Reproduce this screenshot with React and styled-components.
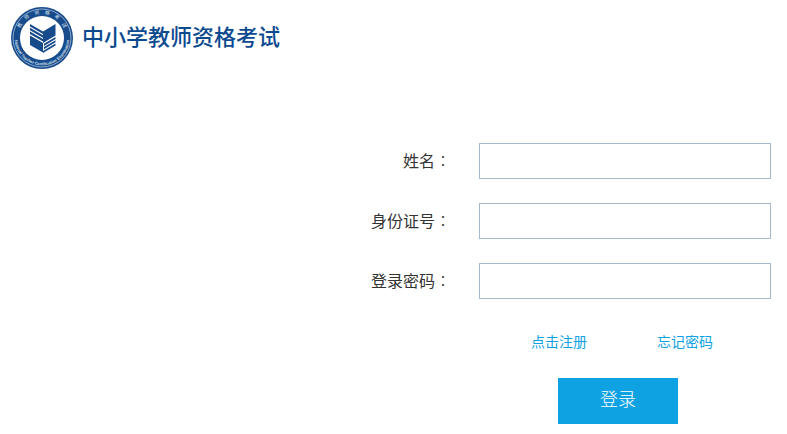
import React from "react";
import styled, { createGlobalStyle } from "styled-components";

const GlobalStyle = createGlobalStyle`
  * { box-sizing: border-box; }
  body {
    margin: 0;
    background: #fff;
    color: #333;
    font-family: "Noto Sans CJK SC", "Liberation Sans", sans-serif;
  }
`;

const Header = styled.header`
  display: flex;
  align-items: center;
  gap: 8px;
  padding: 6px 10px;
`;

const Emblem = styled.svg`
  flex: none;
  width: 64px;
  height: 64px;
`;

const Title = styled.h1`
  margin: 0;
  padding-bottom: 6px;
  color: #0c4a8f;
  font-size: 22px;
  font-weight: 500;
  line-height: 32px;
`;

const LoginForm = styled.form`
  display: flex;
  flex-direction: column;
  gap: 24px;
  max-width: 416px;
  margin: 67px 0 0 auto;
  padding: 0 16px 10px 0;
`;

const Field = styled.div`
  display: flex;
  align-items: center;
  gap: 28px;
`;

const Label = styled.label`
  flex: none;
  width: 80px;
  padding-bottom: 2px;
  font-size: 16px;
  line-height: 34px;
  text-align: right;
  white-space: nowrap;
`;

const Colon = styled.span`
  font-family: "Noto Sans CJK TC", sans-serif;
  font-weight: 300;
`;

const TextBox = styled.input`
  flex: 1;
  min-width: 0;
  height: 36px;
  padding: 0 10px;
  border: 1px solid #a5bace;
  border-radius: 0;
  background: #fff;
  color: inherit;
  font: inherit;
`;

const Actions = styled.div`
  display: flex;
  flex-direction: column;
  align-items: center;
  gap: 26px;
  margin: 8px 0 0 94px;
`;

const Links = styled.nav`
  display: flex;
  gap: 70px;
  padding-left: 8px;
`;

const TextLink = styled.a`
  color: #0ea2e3;
  font-size: 14px;
  line-height: 21px;
  text-decoration: none;
`;

const SubmitButton = styled.button`
  width: 120px;
  height: 46px;
  padding: 0 0 6px;
  border: 0;
  background: #0ea2e3;
  color: #fff;
  font-family: inherit;
  font-size: 18px;
  font-weight: 300;
  line-height: 40px;
  cursor: pointer;
`;

const fields = [
  { id: "name", label: "姓名", type: "text" },
  { id: "idNumber", label: "身份证号", type: "text" },
  { id: "password", label: "登录密码", type: "password" },
];

function Logo() {
  return (
    <Emblem viewBox="0 0 64 64" aria-hidden="true">
      <defs>
        <path id="arcTop" d="M8 32a24 24 0 0 1 48 0" />
        <path id="arcBottom" d="M5 28a27.3 27.3 0 1 0 54 0" />
      </defs>
      <circle cx="32" cy="32" r="31" fill="#174b8b" />
      <circle cx="32" cy="32" r="29" fill="none" stroke="#a9c0da" strokeWidth="0.8" />
      <circle cx="32" cy="32" r="22" fill="#fff" />
      <g fill="#d5e3f1">
        <text fontSize="5" textAnchor="middle">
          <textPath href="#arcTop" startOffset="50%">教　师　资　格　考　试</textPath>
        </text>
        <text fontSize="4" fontWeight="700" textAnchor="middle" fontFamily="Liberation Sans">
          <textPath href="#arcBottom" startOffset="50%">National Teacher Certification Examination</textPath>
        </text>
      </g>
      <g fill="#174b8b">
        <path d="M20 18 33 25.5v2.4L20 20.4z" />
        <path d="M20 21.8 33 29.3v2.4L20 24.2z" />
        <path d="M20 25.6 33 33.1v2.4L20 28z" />
        <path d="M20 29.4 33 36.9V46.5L20 39z" />
        <path d="M33 25.5 45.5 18v11.5L33 37z" />
        <path d="M34 37.8 45.5 30.9v2.1L34 39.9z" />
        <path d="M34 41.1 45.5 34.2v2.1L34 43.2z" />
        <path d="M33 44.9 45.5 37.4v2.1L33 47z" />
      </g>
    </Emblem>
  );
}

export default function App() {
  return (
    <>
      <GlobalStyle />
      <Header>
        <Logo />
        <Title>中小学教师资格考试</Title>
      </Header>
      <main>
        <LoginForm onSubmit={(event) => event.preventDefault()}>
          {fields.map(({ id, label, type }) => (
            <Field key={id}>
              <Label htmlFor={id}>
                {label}
                <Colon>：</Colon>
              </Label>
              <TextBox id={id} name={id} type={type} />
            </Field>
          ))}
          <Actions>
            <Links>
              <TextLink href="#register">点击注册</TextLink>
              <TextLink href="#forgot">忘记密码</TextLink>
            </Links>
            <SubmitButton type="submit">登录</SubmitButton>
          </Actions>
        </LoginForm>
      </main>
    </>
  );
}
